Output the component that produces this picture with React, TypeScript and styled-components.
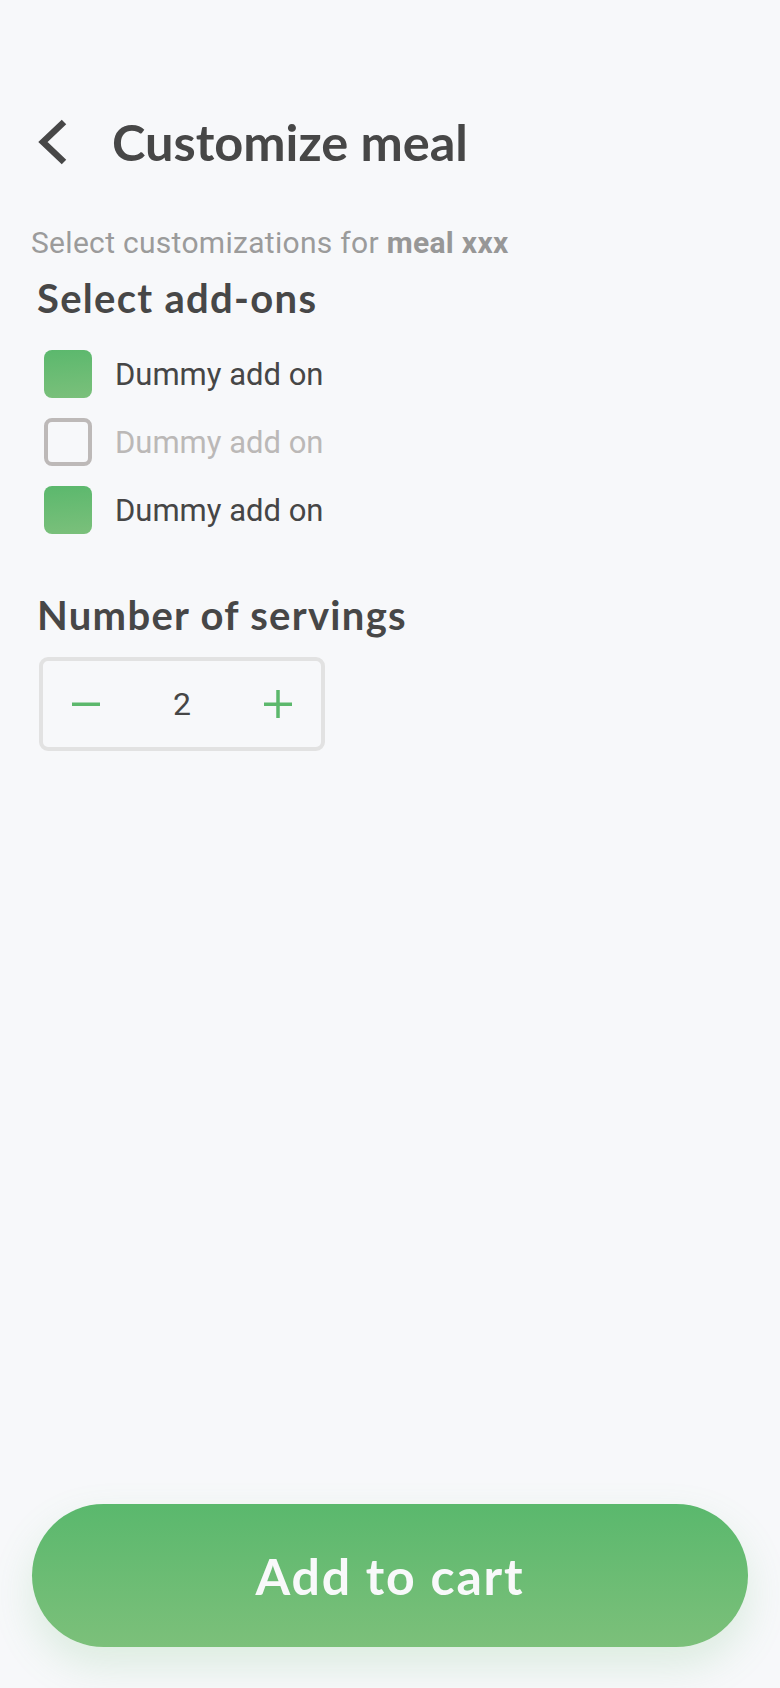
import styled, { createGlobalStyle } from 'styled-components'

const GlobalStyle = createGlobalStyle`
  html, body {
    margin: 0;
    padding: 0;
    background: #f7f8fa;
  }
  * {
    box-sizing: border-box;
  }
`

const Page = styled.div`
  min-height: 100vh;
  display: flex;
  flex-direction: column;
  padding: 116px 32px 41px 37px;
  background: #f7f8fa;
`

const Header = styled.div`
  display: flex;
  align-items: center;
  height: 52px;
`

const BackButton = styled.button`
  display: flex;
  align-items: center;
  justify-content: flex-start;
  width: 74px;
  height: 52px;
  margin-left: 1px;
  padding: 0;
  border: none;
  background: none;
  color: #474747;
  cursor: pointer;
`

const Title = styled.h1`
  margin: 0;
  font-family: Lato, 'Noto Sans', sans-serif;
  font-weight: 700;
  font-size: 50.5px;
  line-height: 1;
  color: #474747;
`

const Subtitle = styled.p`
  margin: 60px 0 0 -6px;
  font-family: Roboto, 'Noto Sans', sans-serif;
  font-weight: 400;
  font-size: 30px;
  letter-spacing: 0.3px;
  line-height: 1;
  color: #9b9b9b;

  b {
    font-weight: 700;
    color: #979797;
  }
`

const SectionTitle = styled.h2<{ $top: number }>`
  margin: ${(p) => p.$top}px 0 0 0;
  font-family: Lato, 'Noto Sans', sans-serif;
  font-weight: 700;
  font-size: 40px;
  letter-spacing: 1.3px;
  line-height: 1;
  color: #474747;
`

const AddonList = styled.div`
  display: flex;
  flex-direction: column;
  gap: 20px;
  margin-top: 32px;
  padding-left: 7px;
`

const AddonRow = styled.label`
  display: flex;
  align-items: center;
  gap: 23px;
  height: 48px;
  cursor: pointer;
`

const Box = styled.span<{ $checked: boolean }>`
  width: 48px;
  height: 48px;
  border-radius: 8px;
  flex-shrink: 0;
  background: ${(p) =>
    p.$checked ? 'linear-gradient(175deg, #5bb86d 0%, #7bc07b 100%)' : 'transparent'};
  border: ${(p) => (p.$checked ? 'none' : '4px solid #bdb9b8')};
`

const AddonName = styled.span<{ $checked: boolean }>`
  font-family: Roboto, 'Noto Sans', sans-serif;
  font-size: 31px;
  line-height: 1;
  color: ${(p) => (p.$checked ? '#464646' : '#bbb8b7')};
`

const Stepper = styled.div`
  display: grid;
  grid-template-columns: auto 1fr auto;
  align-items: center;
  width: 286px;
  height: 94px;
  margin: 22px 0 0 2px;
  padding: 0 29px;
  border: 4px solid #e2e2e2;
  border-radius: 9px;
`

const StepButton = styled.button`
  display: flex;
  align-items: center;
  justify-content: center;
  width: 28px;
  height: 100%;
  padding: 0;
  border: none;
  background: none;
  color: #5cb86c;
  cursor: pointer;
`

const Count = styled.span`
  text-align: center;
  font-family: Roboto, 'Noto Sans', sans-serif;
  font-size: 32px;
  line-height: 1;
  color: #464646;
`

const Spacer = styled.div`
  flex: 1;
`

const CartButton = styled.button`
  display: flex;
  align-items: center;
  justify-content: center;
  width: 716px;
  height: 143px;
  margin-left: -5px;
  border: none;
  border-radius: 72px;
  background: linear-gradient(180deg, #5ab86d 0%, #7cc07a 100%);
  box-shadow: 0 18px 40px rgba(92, 184, 108, 0.18);
  font-family: Lato, 'Noto Sans', sans-serif;
  font-weight: 700;
  font-size: 50px;
  letter-spacing: 1.8px;
  color: #f8f9fa;
  cursor: pointer;
`

const addons = [
  { name: 'Dummy add on', checked: true },
  { name: 'Dummy add on', checked: false },
  { name: 'Dummy add on', checked: true },
]

export default function App() {
  return (
    <>
      <GlobalStyle />
      <Page>
        <Header>
          <BackButton aria-label='Back'>
            <svg width='30' height='46' viewBox='0 0 30 46' fill='none'>
              <path d='M26 3 L5 23 L26 43' stroke='currentColor' strokeWidth='6.5' strokeLinejoin='miter' />
            </svg>
          </BackButton>
          <Title>Customize meal</Title>
        </Header>
        <Subtitle>
          Select customizations for <b>meal xxx</b>
        </Subtitle>
        <SectionTitle $top={20}>Select add-ons</SectionTitle>
        <AddonList>
          {addons.map((a, i) => (
            <AddonRow key={i}>
              <Box $checked={a.checked} />
              <AddonName $checked={a.checked}>{a.name}</AddonName>
            </AddonRow>
          ))}
        </AddonList>
        <SectionTitle $top={61}>Number of servings</SectionTitle>
        <Stepper>
          <StepButton aria-label='Decrease'>
            <svg width='28' height='28' viewBox='0 0 28 28'>
              <rect x='0' y='12.5' width='28' height='3.5' fill='currentColor' />
            </svg>
          </StepButton>
          <Count>2</Count>
          <StepButton aria-label='Increase'>
            <svg width='28' height='28' viewBox='0 0 28 28'>
              <rect x='0' y='12.5' width='28' height='3.5' fill='currentColor' />
              <rect x='12.25' y='0' width='3.5' height='28' fill='currentColor' />
            </svg>
          </StepButton>
        </Stepper>
        <Spacer />
        <CartButton>Add to cart</CartButton>
      </Page>
    </>
  )
}
